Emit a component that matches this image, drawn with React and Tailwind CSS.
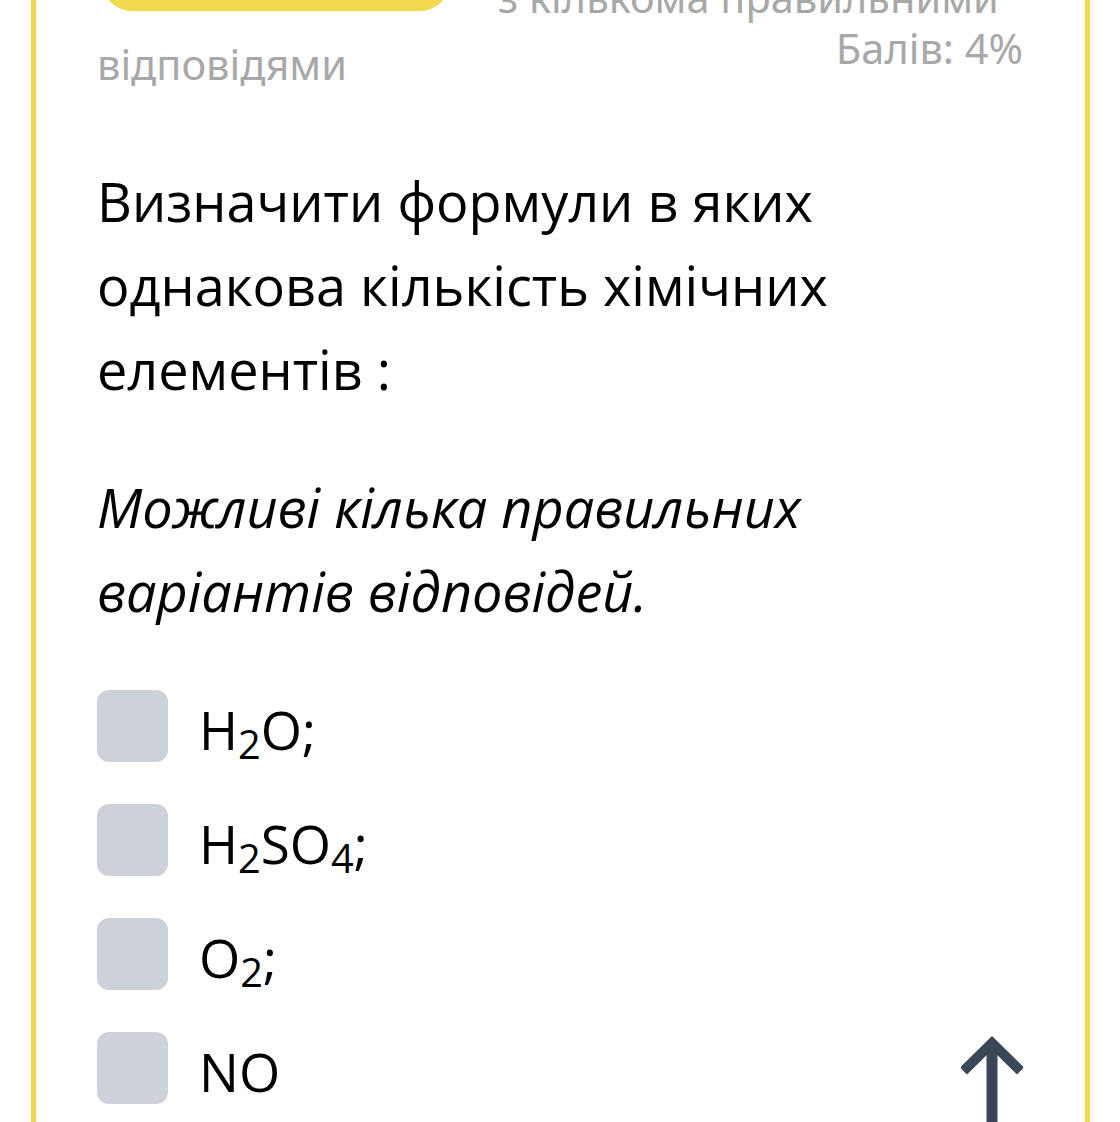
import React from 'react';

const options = [
    <>H<sub>2</sub>O;</>,
    <>H<sub>2</sub>SO<sub>4</sub>;</>,
    <>O<sub>2</sub>;</>,
    <>NO</>,
];

function UpArrow() {
    return (
        <svg width="62" height="95" viewBox="0 0 62 95" className="shrink-0">
            <polyline points="2.5,39 31,11 59.5,39" fill="none" stroke="#394757" strokeWidth="10" />
            <line x1="31" y1="14" x2="31" y2="95" stroke="#394757" strokeWidth="11" />
        </svg>
    );
}

export default function App() {
    return (
        <div className="w-[1120px] h-[1122px] overflow-hidden bg-white">
            <div className="ml-[31px] w-[1059px] min-h-[1200px] border-x-[5px] border-[#f2d84c] pl-[61px] pr-[62px]">
                <div className="font-['Noto_Sans',sans-serif] text-[41.5px] text-[#a8a8a8]">
                    <div className="-mt-[49px] flex items-end">
                        <div className="ml-[5px] mb-[7px] w-[348px] h-[60px] rounded-full bg-[#f2d84c] shrink-0"></div>
                        <div className="ml-[48px] leading-none whitespace-nowrap">з кількома правильними</div>
                    </div>
                    <div className="flex justify-between items-start">
                        <div className="mt-[26px] leading-none">відповідями</div>
                        <div className="mt-[10px] leading-none">Балів: 4%</div>
                    </div>
                </div>

                <div className="font-['Open_Sans',sans-serif] text-black">
                    <p className="mt-[73px] text-[54px] leading-[84px]">
                        Визначити формули в яких<br />
                        однакова кількість хімічних<br />
                        елементів :
                    </p>
                    <p className="mt-[54px] text-[54px] leading-[84px] italic">
                        Можливі кілька правильних<br />
                        варіантів відповідей.
                    </p>

                    <div className="mt-[57px] flex flex-col gap-[42px] text-[53px]">
                        {options.map((opt, i) => (
                            <div key={i} className="flex items-start h-[72px]">
                                <div className="w-[71px] h-[72px] rounded-[12px] bg-[#cdd2da] shrink-0"></div>
                                <div className="ml-[31px] translate-y-[4px] leading-[72px]">{opt}</div>
                                {i === options.length - 1 && (
                                    <div className="ml-auto">
                                        <UpArrow />
                                    </div>
                                )}
                            </div>
                        ))}
                    </div>
                </div>
            </div>
        </div>
    );
}
